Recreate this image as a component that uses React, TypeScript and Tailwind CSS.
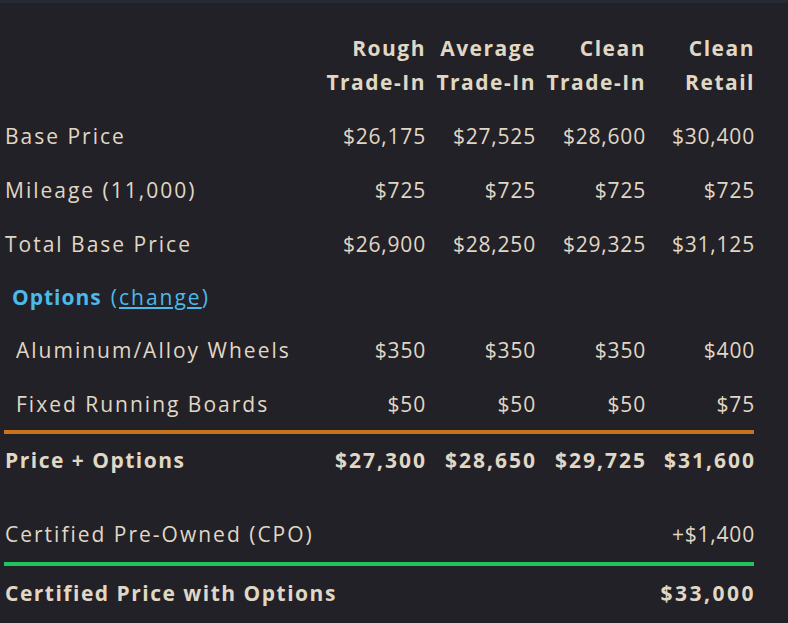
import React from 'react';

type Row = { label: string; values: string[] };

const HEADERS = [
  ['Rough', 'Trade-In'],
  ['Average', 'Trade-In'],
  ['Clean', 'Trade-In'],
  ['Clean', 'Retail'],
];

const BASE_ROWS: Row[] = [
  { label: 'Base Price', values: ['$26,175', '$27,525', '$28,600', '$30,400'] },
  { label: 'Mileage (11,000)', values: ['$725', '$725', '$725', '$725'] },
  { label: 'Total Base Price', values: ['$26,900', '$28,250', '$29,325', '$31,125'] },
];

const OPTION_ROWS: Row[] = [
  { label: 'Aluminum/Alloy Wheels', values: ['$350', '$350', '$350', '$400'] },
  { label: 'Fixed Running Boards', values: ['$50', '$50', '$50', '$75'] },
];

const GRID = 'grid grid-cols-[311px_110px_110px_110px_109px]';

function PriceRow({ row, indent, bold }: { row: Row; indent?: boolean; bold?: boolean }) {
  return (
    <div className={`${GRID} h-[54px] items-center ${bold ? 'font-bold' : ''}`}>
      <div className={`${indent ? 'pl-3' : 'pl-px'} ${bold ? 'tracking-[1.5px]' : 'tracking-[2px]'}`}>
        {row.label}
      </div>
      {row.values.map((v, i) => (
        <div
          key={i}
          className={`text-right ${bold ? 'tracking-[2px] mr-[-2px]' : 'tracking-[0.8px] mr-[-1px]'}`}
        >
          {v}
        </div>
      ))}
    </div>
  );
}

export default function App() {
  return (
    <div
      className="min-h-screen w-[788px] bg-[#222127] text-[#e0d7c4] text-[21px] border-t-[3px] border-[#262a33]"
      style={{ fontFamily: '"Open Sans", "Liberation Sans", sans-serif' }}
    >
      <div className="pl-1 w-[754px]">
        {/* column headers */}
        <div className={`${GRID} pt-[28px] pb-[11px] font-bold leading-[34px] tracking-[1.5px]`}>
          <div />
          {HEADERS.map(([a, b], i) => (
            <div key={i} className="text-right mr-[-1px]">
              <div>{a}</div>
              <div>{b}</div>
            </div>
          ))}
        </div>

        {BASE_ROWS.map((r) => (
          <PriceRow key={r.label} row={r} />
        ))}

        {/* options block */}
        <div className="h-[52px] flex items-center pl-2 text-[#4bb9e9]">
          <span className="font-bold tracking-[1px]">Options</span>
          <span className="ml-[9px] tracking-[2px]">
            (<span className="underline underline-offset-2">change</span>)
          </span>
        </div>
        {OPTION_ROWS.map((r) => (
          <PriceRow key={r.label} row={r} indent />
        ))}

        <div className="h-[4px] bg-[#c8731d] mt-[-2px]" />
        <PriceRow row={{ label: 'Price + Options', values: ['$27,300', '$28,650', '$29,725', '$31,600'] }} bold />

        <div className="h-[20px]" />
        <div className="flex h-[54px] items-center justify-between pl-px">
          <span className="tracking-[2px]">Certified Pre-Owned (CPO)</span>
          <span className="tracking-[0.8px] mr-[-1px]">+$1,400</span>
        </div>
        <div className="h-[4px] bg-[#22c35c]" />
        <div className="flex h-[56px] items-center justify-between pl-px font-bold">
          <span className="tracking-[1.5px]">Certified Price with Options</span>
          <span className="tracking-[2.5px] mr-[-2px]">$33,000</span>
        </div>
      </div>
    </div>
  );
}
